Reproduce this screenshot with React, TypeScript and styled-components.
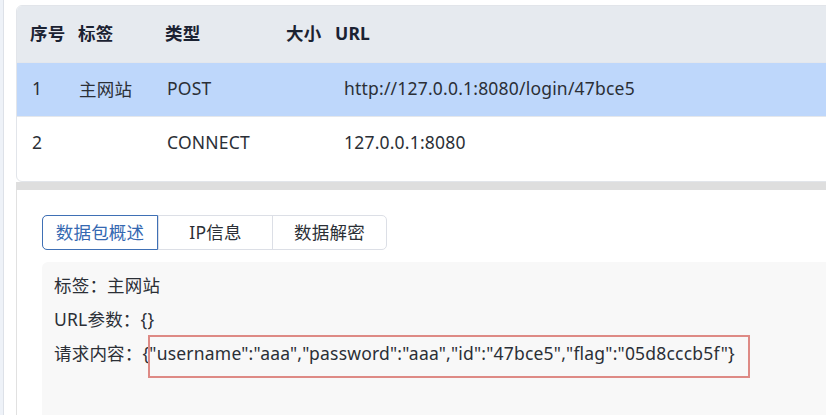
import React from "react";
import styled, { createGlobalStyle } from "styled-components";

const GlobalStyle = createGlobalStyle`
  html, body {
    margin: 0;
    padding: 0;
    background: #ffffff;
    overflow: hidden;
  }
  body {
    font-family: "Noto Sans", "Noto Sans CJK SC", sans-serif;
    font-size: 17.5px;
    letter-spacing: 0.2px;
    color: #2b2f36;
  }
`;

const Page = styled.div`
  display: flex;
  height: 415px;
  width: 100%;
`;

const SideStrip = styled.div`
  width: 3px;
  flex: none;
  background: #eef2f8;
  border-right: 1px solid #dde1e8;
`;

const Main = styled.div`
  flex: 1;
  display: flex;
  flex-direction: column;
  padding: 5px 0 0 12px;
  margin-right: -24px;
  min-width: 0;
`;

const TableCard = styled.div`
  height: 177px;
  border: 1px solid #e2e5ea;
  border-radius: 6px;
  overflow: hidden;
  background: #ffffff;
  flex: none;
  box-sizing: border-box;
`;

const Row = styled.div<{ $cols: string; $pad: number; $head?: boolean; $selected?: boolean }>`
  display: grid;
  grid-template-columns: ${(p) => p.$cols};
  align-items: center;
  box-sizing: border-box;
  padding-left: ${(p) => p.$pad}px;
  padding-bottom: 3px;
  height: ${(p) => (p.$head ? 56 : 54)}px;
  background: ${(p) => (p.$head ? "#e6eaef" : p.$selected ? "#bed7fb" : "#ffffff")};
  border-top: ${(p) => (p.$head ? "none" : "1px solid #e4e7ec")};
  font-weight: ${(p) => (p.$head ? 700 : 400)};
  color: ${(p) => (p.$head ? "#1b2232" : "#2b2f36")};
  white-space: nowrap;
`;

const Cell = styled.div`
  overflow: hidden;
`;

const Splitter = styled.div`
  height: 8px;
  background: #dedede;
  flex: none;
`;

const DetailPanel = styled.div`
  flex: 1;
  border-left: 1px solid #e1e1e1;
  padding: 25px 0 0 25px;
  display: flex;
  flex-direction: column;
`;

const TabGroup = styled.div`
  display: inline-flex;
  align-self: flex-start;
  border: 1px solid #dcdfe6;
  border-radius: 5px;
  height: 35px;
  box-sizing: border-box;
`;

const Tab = styled.div<{ $active?: boolean; $first?: boolean }>`
  width: 114px;
  display: flex;
  align-items: center;
  justify-content: center;
  box-sizing: border-box;
  padding-bottom: 2px;
  color: ${(p) => (p.$active ? "#3568b1" : "#2b2f36")};
  border-left: ${(p) => (p.$first ? "none" : "1px solid #dcdfe6")};
  ${(p) =>
    p.$active
      ? `border-radius: 5px 0 0 5px; margin: -1px 0 -1px -1px; width: 116px; height: 35px; border: 1px solid #3f70b5;`
      : ""}
`;

const Content = styled.div`
  margin-top: 12px;
  flex: 1;
  background: #f8f8f8;
  border-radius: 6px 0 0 0;
  padding: 6px 12px;
`;

const Line = styled.div`
  line-height: 34px;
  white-space: nowrap;
`;

const Highlight = styled.span`
  position: relative;
  &::after {
    content: "";
    position: absolute;
    left: -1px;
    right: -15px;
    top: -6px;
    bottom: -13px;
    border: 2px solid #de8a85;
    pointer-events: none;
  }
`;

const headCols = "48px 87px 121px 49px 1fr";
const bodyCols = "47px 88px 121px 56px 1fr";

const rows = [
  { id: "1", tag: "主网站", type: "POST", size: "", url: "http://127.0.0.1:8080/login/47bce5", selected: true },
  { id: "2", tag: "", type: "CONNECT", size: "", url: "127.0.0.1:8080", selected: false },
];

export default function App() {
  return (
    <>
      <GlobalStyle />
      <Page>
        <SideStrip />
        <Main>
          <TableCard>
            <Row $cols={headCols} $pad={13} $head>
              <Cell>序号</Cell>
              <Cell>标签</Cell>
              <Cell>类型</Cell>
              <Cell>大小</Cell>
              <Cell>URL</Cell>
            </Row>
            {rows.map((r) => (
              <Row key={r.id} $cols={bodyCols} $pad={15} $selected={r.selected}>
                <Cell>{r.id}</Cell>
                <Cell>{r.tag}</Cell>
                <Cell>{r.type}</Cell>
                <Cell>{r.size}</Cell>
                <Cell>{r.url}</Cell>
              </Row>
            ))}
          </TableCard>
          <Splitter />
          <DetailPanel>
            <TabGroup>
              <Tab $active $first>数据包概述</Tab>
              <Tab>IP信息</Tab>
              <Tab>数据解密</Tab>
            </TabGroup>
            <Content>
              <Line>标签：主网站</Line>
              <Line>URL参数：{"{}"}</Line>
              <Line>
                请求内容：{"{"}
                <Highlight>{'"username":"aaa","password":"aaa","id":"47bce5","flag":"05d8cccb5f"}'}</Highlight>
              </Line>
            </Content>
          </DetailPanel>
        </Main>
      </Page>
    </>
  );
}
